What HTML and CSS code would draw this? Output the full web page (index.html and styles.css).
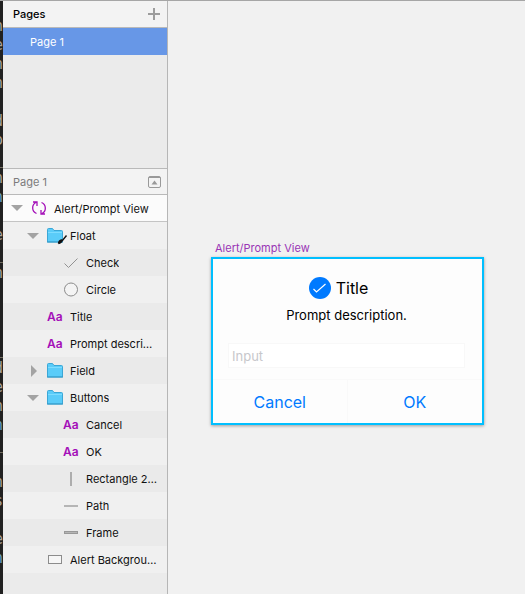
FILE: index.html
```html
<!DOCTYPE html>
<html lang="en">
<head>
<meta charset="utf-8">
<title>Alert/Prompt View</title>
<link rel="stylesheet" href="styles.css">
</head>
<body>
<svg class="defs" aria-hidden="true">
  <symbol id="folder" viewBox="0 0 16 15">
    <path d="M.5 14V1.5Q.5.5 1.5.5H5.500L7 2.500H14.500Q15.500 2.500 15.500 3.500V14Z" fill="#5accf9" stroke="#3ba7d6"/>
    <path d="M1 4.500H15" stroke="#7ddcff"/>
    <path d="M0 14H16" stroke="#359ac8"/>
  </symbol>
  <symbol id="down" viewBox="0 0 12 12"><path d="M0 3H12L6 9Z" fill="#a3a3a3"/></symbol>
  <symbol id="right" viewBox="0 0 12 12"><path d="M4 0V12L10 6Z" fill="#a3a3a3"/></symbol>
</svg>
<div class="app">
  <div class="code" aria-hidden="true"><pre>n
e
n
n

d
o
_
n
<i>n</i>

e
_
n



_
d
e
n
<i>n</i>
_

n
s

e
<i>n</i></pre></div>
  <aside class="sidebar">
    <header class="bar">
      <h2>Pages</h2>
      <button class="tool" aria-label="Add page"><svg width="12" height="12"><path d="M6 0V12M0 6H12" stroke="#9c9c9c" stroke-width="2"/></svg></button>
    </header>
    <div class="pages"><a class="page" href="#canvas">Page 1</a></div>
    <header class="bar current">
      <h2>Page 1</h2>
      <button class="tool" aria-label="Collapse page list"><svg width="13" height="12"><rect x=".5" y=".5" width="12" height="11" rx="1.500" fill="none" stroke="#999"/><path d="M1 1.500H12" stroke="#999"/><path d="M3.500 8.500H9.500L6.500 4.500Z" fill="#999"/></svg></button>
    </header>
    <ul class="layers">
      <li class="row root"><button class="fold" aria-label="Toggle Alert/Prompt View"><svg><use href="#down"/></svg></button>
        <svg class="icon" viewBox="0 0 16 16" fill="none" stroke="#a40fb8" stroke-width="1.300"><path d="M5.500 13.500C.5 11.500.5 4.500 5 2.500M2 2H6V6M10.500 2.500C15.500 4.500 15.500 11.500 11 13.500M14 14H10V10"/></svg><span>Alert/Prompt View</span></li>
      <li class="row l1"><button class="fold" aria-label="Toggle Float"><svg><use href="#down"/></svg></button>
        <svg class="icon" viewBox="0 0 16 16"><use href="#folder" width="16" height="15"/><path d="M11.500 15.500Q12 12.500 14.500 12Q15.500 14.500 11.500 15.500M15 13L19.500 7.500" fill="#111" stroke="#111" stroke-width="1.400"/></svg><span>Float</span></li>
      <li class="row l2"><svg class="icon" viewBox="0 0 16 16"><path d="M1.500 8.500L5.500 12.500L14.500 3.500" fill="none" stroke="#929292"/></svg><span>Check</span></li>
      <li class="row l2"><svg class="icon" viewBox="0 0 16 16"><circle cx="8" cy="7.500" r="6.500" fill="#f4f4f4" stroke="#8c8c8c"/></svg><span>Circle</span></li>
      <li class="row l1 leaf"><b class="icon aa">Aa</b><span>Title</span></li>
      <li class="row l1 leaf"><b class="icon aa">Aa</b><span>Prompt description.</span></li>
      <li class="row l1"><button class="fold" aria-label="Toggle Field"><svg><use href="#right"/></svg></button>
        <svg class="icon" viewBox="0 0 16 16"><use href="#folder" width="16" height="15"/></svg><span>Field</span></li>
      <li class="row l1"><button class="fold" aria-label="Toggle Buttons"><svg><use href="#down"/></svg></button>
        <svg class="icon" viewBox="0 0 16 16"><use href="#folder" width="16" height="15"/></svg><span>Buttons</span></li>
      <li class="row l2"><b class="icon aa">Aa</b><span>Cancel</span></li>
      <li class="row l2"><b class="icon aa">Aa</b><span>OK</span></li>
      <li class="row l2"><svg class="icon" viewBox="0 0 16 16"><path d="M7 1H9V15H7Z" fill="#adadad"/></svg><span>Rectangle 2 Copy</span></li>
      <li class="row l2"><svg class="icon" viewBox="0 0 16 16"><path d="M1 7H15V9H1Z" fill="#b5b5b5"/></svg><span>Path</span></li>
      <li class="row l2"><svg class="icon" viewBox="0 0 16 16"><rect x="1.500" y="6.500" width="13" height="2" fill="#b5b5b5" stroke="#999"/></svg><span>Frame</span></li>
      <li class="row l1 leaf"><svg class="icon" viewBox="0 0 16 16"><rect x="1.500" y="3.500" width="13" height="8" fill="#f6f6f6" stroke="#8c8c8c"/></svg><span>Alert Background</span></li>
    </ul>
  </aside>
  <main class="canvas" id="canvas">
    <section class="artboard">
      <h1 class="label">Alert/Prompt View</h1>
      <form class="alert">
        <div class="body">
          <h2 class="title"><svg width="22" height="22"><circle cx="11" cy="11" r="11" fill="#007aff"/><path d="M4.500 12L7.500 15L16.500 7" fill="none" stroke="#fff" stroke-width="1.200"/></svg><label for="prompt">Title</label></h2>
          <p class="text">Prompt description.</p>
          <input class="field" id="prompt" type="text" placeholder="Input">
        </div>
        <div class="actions"><button type="button">Cancel</button><button type="button">OK</button></div>
      </form>
    </section>
  </main>
</div>
</body>
</html>
```

FILE: styles.css
```css
* { box-sizing: border-box; }
body {
  margin: 0;
  font: 11px/16px Inter, "Liberation Sans", sans-serif;
  color: #111;
  background: #f1f1f1;
}
h1, h2, p, ul, pre { margin: 0; padding: 0; font: inherit; }
button { border: 0; padding: 0; background: none; font: inherit; color: inherit; }
svg { display: block; flex: none; }
.defs { display: none; }

.app { display: flex; min-height: 100vh; border-top: 1px solid #a6a6a6; }

.code {
  display: flex;
  justify-content: flex-end;
  flex: none;
  width: 3px;
  padding-top: 16px;
  overflow: hidden;
  background: #212121;
}
.code pre { font: 15px/19px "DejaVu Sans Mono", monospace; color: #aaa39b; }
.code i { font-style: normal; color: #6c9fc0; }

.sidebar {
  display: flex;
  flex-direction: column;
  flex: none;
  width: 165px;
  border-right: 1px solid #b6b6b6;
  background: #ebebeb;
}
.bar {
  display: flex;
  align-items: center;
  justify-content: space-between;
  height: 27px;
  padding: 0 7px 0 10px;
  border-bottom: 1px solid #b9b9b9;
  background: #f3f3f3;
  color: #000;
}
.bar h2 { font-weight: 500; }
.bar.current { padding-right: 6px; border-top: 1px solid #b9b9b9; color: #7b7b7b; }
.bar.current h2 { font-weight: 400; }
.tool { display: flex; }
.pages { height: 140px; }
.page {
  display: block;
  padding: 6px 27px 5px;
  background: #6797e7;
  color: #fff;
  text-decoration: none;
}

.layers { list-style: none; }
.row {
  display: flex;
  align-items: center;
  height: 27px;
  padding-right: 8px;
  background: #f0f0f0;
}
.row:nth-child(odd) { background: #eaeaea; }
.row.root { background: #fbfbfb; border-bottom: 1px solid #c4c4c4; padding-left: 8px; }
.l1 { padding-left: 24px; }
.l2 { padding-left: 60px; }
.l1.leaf { padding-left: 44px; }
.fold { width: 12px; margin-right: 8px; flex: none; }
.fold svg { width: 12px; height: 12px; }
.icon { width: 16px; height: 16px; margin-right: 7px; flex: none; overflow: visible; }
.row span { padding-top: 1px; overflow: hidden; text-overflow: ellipsis; white-space: nowrap; }
.aa { color: #a40fb8; font-size: 12px; font-weight: 600; }

.canvas { flex: 1; min-width: 0; padding: 239px 41px 40px 43px; background: #f1f1f1; }
.label { padding: 0 4px 1px; color: #9a35b5; }
.alert {
  border: 2px solid #00bfff;
  background: #fdfdfd;
  box-shadow: 0 1px 3px rgba(0, 0, 0, .35);
  color: #000;
}
.body { padding: 18px 17px 11px 15px; }
.title {
  display: flex;
  align-items: center;
  justify-content: center;
  gap: 5px;
  padding-right: 16px;
  font-size: 16px;
  line-height: 22px;
}
.text { padding: 7px 0 19px; font-size: 13px; line-height: 18px; text-align: center; }
.field {
  display: block;
  width: 100%;
  height: 25px;
  padding: 1px 3px 0;
  border: 1px solid #f8f8f8;
  background: #fff;
  font: 13px/18px Inter, "Liberation Sans", sans-serif;
}
.field::placeholder { color: #c7c7cb; opacity: 1; }
.actions { display: grid; grid-template-columns: 1fr 1fr; border-top: 1px solid #f9f9f9; }
.actions button { height: 43px; color: #007aff; font-size: 16px; }
.actions button:first-child { border-right: 1px solid #f9f9f9; }
```
